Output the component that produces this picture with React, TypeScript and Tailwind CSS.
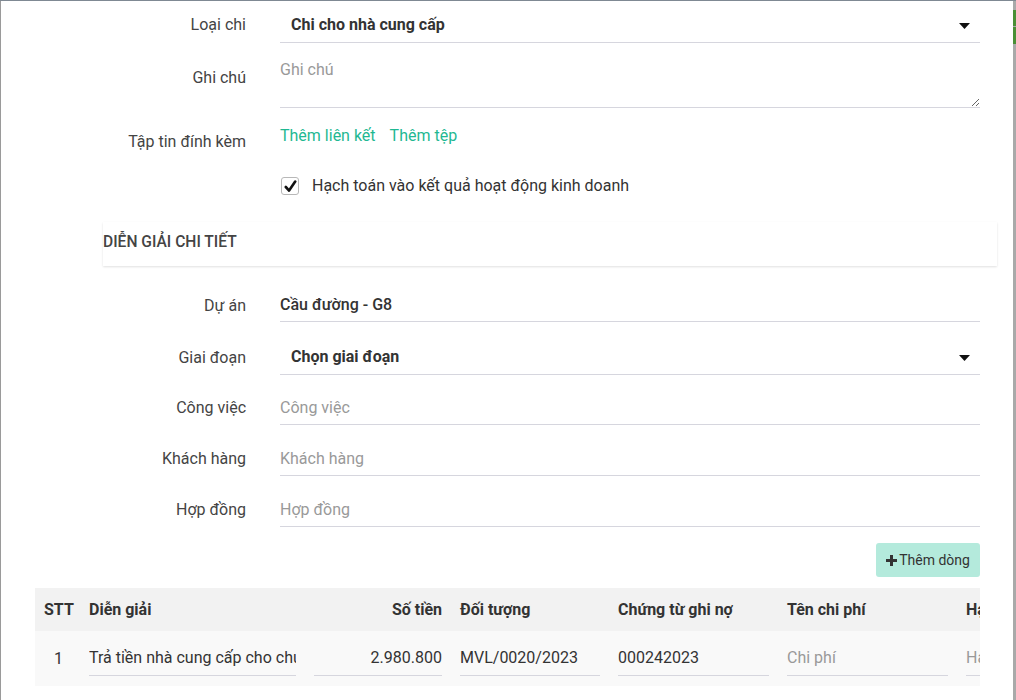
import React from "react";

const font = { fontFamily: "Roboto, 'Noto Sans', Arial, sans-serif" };

function Caret() {
  return (
    <svg width="11" height="6" viewBox="0 0 11 6" className="shrink-0">
      <path d="M0 0h11L5.5 6z" fill="#111" />
    </svg>
  );
}

function Row({ label, children, className = "", labelClass = "leading-[34px]" }: { label: string; children: React.ReactNode; className?: string; labelClass?: string }) {
  return (
    <div className={`grid grid-cols-[245px_700px] gap-x-[34px] ${className}`}>
      <div className={`text-right text-[16px] text-[#444] ${labelClass}`}>{label}</div>
      <div>{children}</div>
    </div>
  );
}

function Field({ value, placeholder, medium }: { value?: string; placeholder?: string; medium?: boolean }) {
  return (
    <div className="h-[34px] border-b border-[#d6d6de] flex items-center text-[16px]">
      {value ? (
        <span className={`${medium ? "font-medium" : ""} text-[#333]`}>{value}</span>
      ) : (
        <span className="text-[#999]">{placeholder}</span>
      )}
    </div>
  );
}

function Select({ value }: { value: string }) {
  return (
    <div className="h-[34px] border-b border-[#d6d6de] flex items-center justify-between pl-[11px] pr-[10px] text-[16px]">
      <span className="font-bold text-[#333] -mt-[1px]">{value}</span>
      <Caret />
    </div>
  );
}

function Cell({ children, className = "" }: { children: React.ReactNode; className?: string }) {
  return (
    <div className={`h-[34px] border-b border-[#d6d6de] flex items-center overflow-hidden whitespace-nowrap text-[16px] ${className}`}>
      {children}
    </div>
  );
}

export default function App() {
  return (
    <div className="w-[1016px] h-[700px] overflow-hidden flex border-t border-[#7f8993] bg-[#a9a9a9]" style={font}>
      <div className="w-[1013px] h-full bg-white border-l border-[#9a9a9a] flex flex-col">
        <Row label="Loại chi" className="mt-[8px]" labelClass="leading-[32px]">
          <Select value="Chi cho nhà cung cấp" />
        </Row>

        <Row label="Ghi chú" className="mt-[12px]" labelClass="pt-[13px] leading-5">
          <textarea
            placeholder="Ghi chú"
            className="block w-full h-[53px] border-b border-[#d6d6de] pt-[5px] leading-5 text-[16px] text-[#333] placeholder:text-[#999] outline-none resize-y"
          />
        </Row>

        <Row label="Tập tin đính kèm" className="mt-[17px]" labelClass="pt-[7px] leading-5">
          <div className="flex gap-[14px] text-[16px] leading-5 pt-[1px] text-[#1fb892]">
            <span>Thêm liên kết</span>
            <span>Thêm tệp</span>
          </div>
        </Row>

        <Row label="" className="mt-[24px]" labelClass="leading-5">
          <div className="flex items-center h-5 gap-[13px]">
            <div className="ml-[1px] w-[18px] h-[18px] rounded-[3px] border border-[#b8b8b8] bg-white flex items-center justify-center">
              <svg width="13" height="13" viewBox="0 0 13 13">
                <path d="M1.8 7l3.3 3.6L11.2 1.6" stroke="#111" strokeWidth="2.6" fill="none" strokeLinecap="round" strokeLinejoin="round" />
              </svg>
            </div>
            <span className="text-[16px] text-[#333]">Hạch toán vào kết quả hoạt động kinh doanh</span>
          </div>
        </Row>

        <div className="mt-[26px] ml-[102px] w-[894px] h-[44px] bg-white shadow-[0_1px_2px_rgba(0,0,0,0.12)] flex items-center">
          <span className="text-[15.6px] font-medium text-[#444] -mt-[3px]">DIỄN GIẢI CHI TIẾT</span>
        </div>

        <Row label="Dự án" className="mt-[22px]" labelClass="leading-[34px] translate-y-[1px]">
          <Field value="Cầu đường - G8" medium />
        </Row>
        <Row label="Giai đoạn" className="mt-[19px]">
          <Select value="Chọn giai đoạn" />
        </Row>
        <Row label="Công việc" className="mt-[16px]">
          <Field placeholder="Công việc" />
        </Row>
        <Row label="Khách hàng" className="mt-[17px]">
          <Field placeholder="Khách hàng" />
        </Row>
        <Row label="Hợp đồng" className="mt-[17px]">
          <Field placeholder="Hợp đồng" />
        </Row>

        <div className="mt-[16px] ml-[279px] w-[700px] flex justify-end">
          <div className="h-[34px] w-[104px] rounded-[3px] bg-[#b4eadc] flex items-center justify-center gap-[2px] text-[14px] text-[#333]">
            <svg width="11" height="11" viewBox="0 0 11 11">
              <path d="M4 0h3v4h4v3H7v4H4V7H0V4h4z" fill="#333" />
            </svg>
            <span>Thêm dòng</span>
          </div>
        </div>

        <div className="mt-[11px] ml-[34px] w-[945px] overflow-hidden">
          <div className="w-[1100px]">
            <div className="flex h-[43px] bg-[#f2f2f2] items-center text-[16px] font-bold text-[#333]">
              <div className="w-[45px] pl-[9px]">STT</div>
              <div className="w-[225px] px-[9px]">Diễn giải</div>
              <div className="w-[146px] px-[9px] text-right">Số tiền</div>
              <div className="w-[158px] px-[9px]">Đối tượng</div>
              <div className="w-[169px] px-[9px]">Chứng từ ghi nợ</div>
              <div className="w-[179px] px-[9px]">Tên chi phí</div>
              <div className="w-[170px] px-[9px]">Hạng mục</div>
            </div>
            <div className="flex h-[55px] bg-[#f9f9f9] items-center text-[#333]">
              <div className="w-[45px] text-center text-[16px] pl-[2px]">1</div>
              <div className="w-[225px] px-[9px]">
                <Cell>Trả tiền nhà cung cấp cho chủ đầu tư</Cell>
              </div>
              <div className="w-[146px] px-[9px]">
                <Cell className="justify-end">2.980.800</Cell>
              </div>
              <div className="w-[158px] px-[9px]">
                <Cell>MVL/0020/2023</Cell>
              </div>
              <div className="w-[169px] px-[9px]">
                <Cell>000242023</Cell>
              </div>
              <div className="w-[179px] px-[9px]">
                <Cell className="text-[#999]">Chi phí</Cell>
              </div>
              <div className="w-[170px] px-[9px]">
                <Cell className="text-[#999]">Hạng mục</Cell>
              </div>
            </div>
          </div>
        </div>
      </div>
      <div className="w-[3px] h-full flex flex-col">
        <div className="h-[9px]" />
        <div className="h-[16px] bg-[#4a8f35]" />
        <div className="h-[1px] bg-[#a9a9a9]" />
        <div className="h-[17px] bg-[#4a8f35]" />
      </div>
    </div>
  );
}
